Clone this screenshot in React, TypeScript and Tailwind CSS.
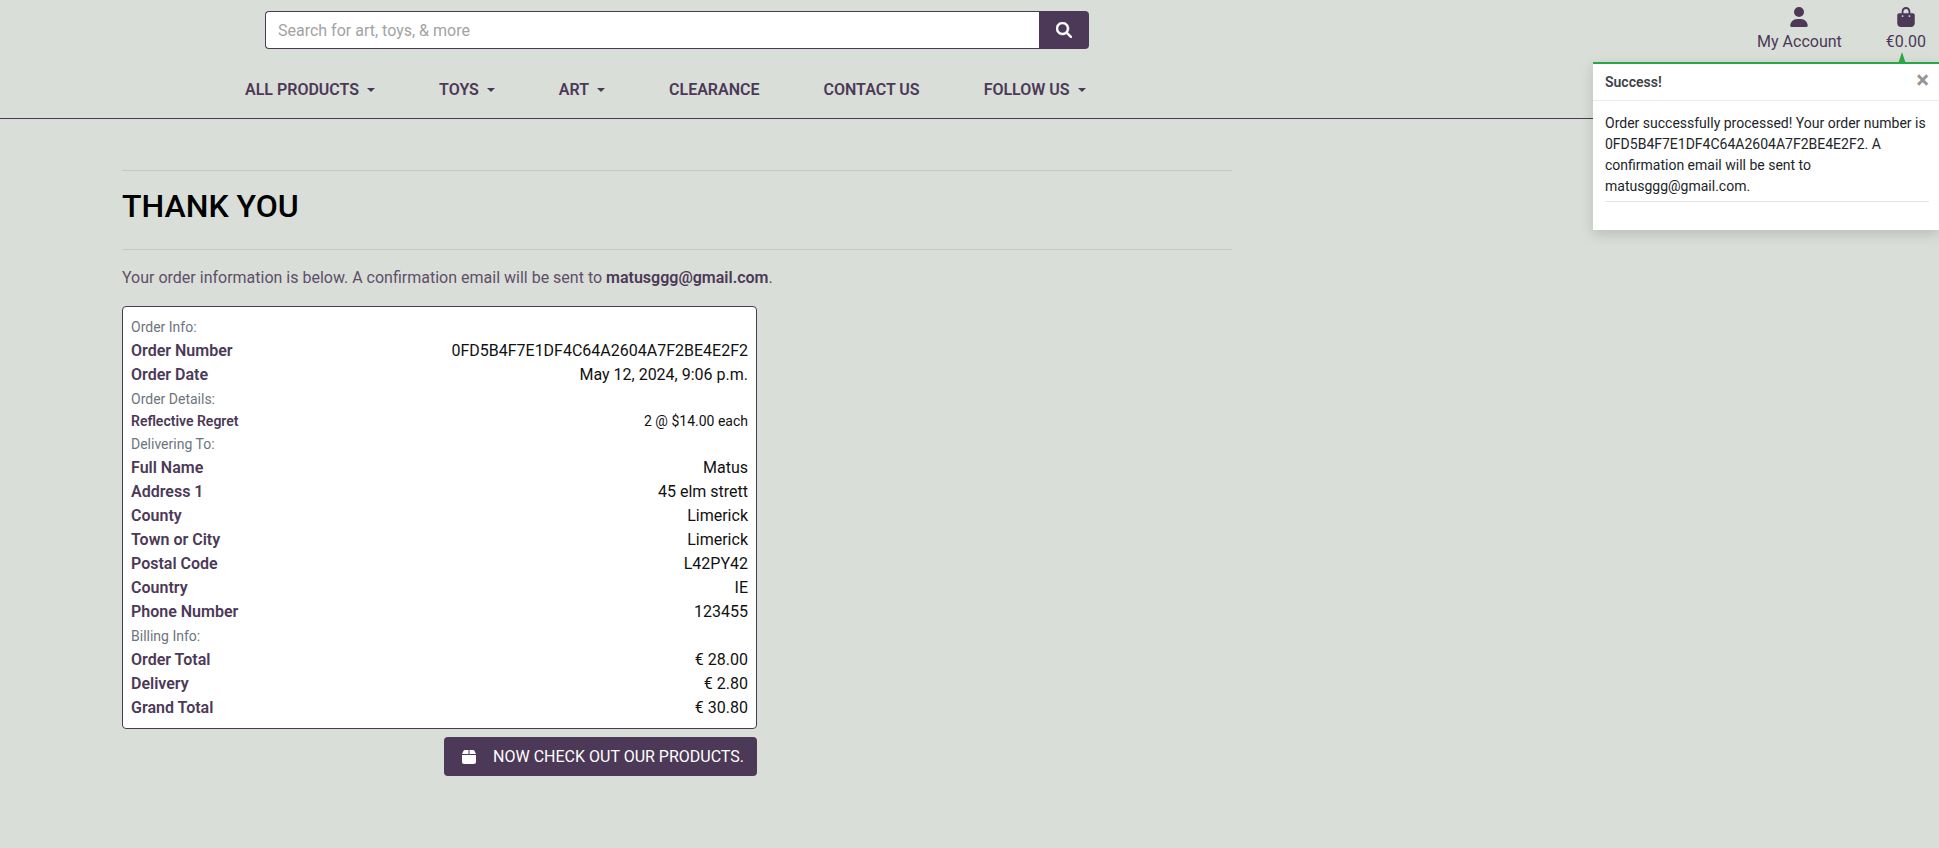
import React from "react";
import { FaBagShopping, FaBox, FaMagnifyingGlass, FaUser } from "react-icons/fa6";

const navItems = [
  { label: "ALL PRODUCTS", menu: true },
  { label: "TOYS", menu: true },
  { label: "ART", menu: true },
  { label: "CLEARANCE", menu: false },
  { label: "CONTACT US", menu: false },
  { label: "FOLLOW US", menu: true },
];

type Row = { label: string; value: string; small?: boolean };

const sections: { title: string; rows: Row[] }[] = [
  {
    title: "Order Info:",
    rows: [
      { label: "Order Number", value: "0FD5B4F7E1DF4C64A2604A7F2BE4E2F2" },
      { label: "Order Date", value: "May 12, 2024, 9:06 p.m." },
    ],
  },
  {
    title: "Order Details:",
    rows: [{ label: "Reflective Regret", value: "2 @ $14.00 each", small: true }],
  },
  {
    title: "Delivering To:",
    rows: [
      { label: "Full Name", value: "Matus" },
      { label: "Address 1", value: "45 elm strett" },
      { label: "County", value: "Limerick" },
      { label: "Town or City", value: "Limerick" },
      { label: "Postal Code", value: "L42PY42" },
      { label: "Country", value: "IE" },
      { label: "Phone Number", value: "123455" },
    ],
  },
  {
    title: "Billing Info:",
    rows: [
      { label: "Order Total", value: "€ 28.00" },
      { label: "Delivery", value: "€ 2.80" },
      { label: "Grand Total", value: "€ 30.80" },
    ],
  },
];

function Caret() {
  return (
    <svg className="h-1 w-2 fill-current" viewBox="0 0 8 4" aria-hidden="true">
      <path d="M0 0h8L4 4z" />
    </svg>
  );
}

function SearchForm() {
  return (
    <form className="flex h-[38px] w-full max-w-[824px]" onSubmit={(e) => e.preventDefault()}>
      <input
        type="text"
        aria-label="Search"
        placeholder="Search for art, toys, & more"
        className="min-w-0 flex-1 rounded-l border border-r-0 border-[#4c3957] bg-white px-3 pt-0.5 text-base text-[#4c3957] placeholder:text-[#a3a3a3]"
      />
      <button
        type="submit"
        aria-label="Search"
        className="flex w-[50px] items-center justify-center rounded-r bg-[#4c3957] text-white"
      >
        <FaMagnifyingGlass className="size-4 stroke-current" strokeWidth={16} />
      </button>
    </form>
  );
}

function Header() {
  return (
    <header className="relative border-b border-[#4c3957] pt-[11px] pb-4">
      <div className="flex items-start justify-between pr-[13px] pl-[265px]">
        <SearchForm />
        <div className="-mt-1 flex shrink-0 gap-11">
          <a href="#account" className="flex flex-col items-center">
            <FaUser className="h-5 w-[18px]" />
            <span className="mt-[3px] leading-6">My Account</span>
          </a>
          <a href="#bag" className="flex flex-col items-center">
            <FaBagShopping className="h-5 w-[18px]" />
            <span className="mt-[3px] leading-6">€0.00</span>
          </a>
        </div>
      </div>
      <nav className="flex gap-16 pt-6 pl-[245px] font-semibold">
        {navItems.map((item) => (
          <a key={item.label} href="#nav" className="flex items-center gap-2 leading-6 whitespace-nowrap">
            {item.label}
            {item.menu && <Caret />}
          </a>
        ))}
      </nav>
      <Toast />
    </header>
  );
}

function Toast() {
  return (
    <div
      role="status"
      className="absolute top-[62px] right-0 w-[346px] border-t-2 border-[#28a745] bg-white text-sm leading-[21px] text-[#212529] shadow-[0_4px_12px_rgba(0,0,0,0.15)]"
    >
      <svg className="absolute right-[33px] bottom-full h-3 w-2 fill-[#28a745]" viewBox="0 0 8 12" aria-hidden="true">
        <path d="M4 0l4 12H0z" />
      </svg>
      <div className="flex h-[37px] items-center justify-between border-b border-[#ececec] pr-2.5 pl-3">
        <strong className="font-semibold text-[#3d4247]">Success!</strong>
        <button type="button" aria-label="Close" className="pb-1 text-2xl leading-6 font-bold text-[#969696]">
          ×
        </button>
      </div>
      <div className="pt-3 pr-2.5 pb-7 pl-3">
        <p className="pb-1">
          Order successfully processed! Your order number is 0FD5B4F7E1DF4C64A2604A7F2BE4E2F2. A confirmation email
          will be sent to matusggg@gmail.com.
        </p>
        <hr className="border-[#e5e5e5]" />
      </div>
    </div>
  );
}

function OrderSummary() {
  return (
    <div className="rounded border border-[#4c3957] bg-white p-2">
      {sections.map((section) => (
        <section key={section.title}>
          <h2 className="text-sm leading-6 text-[#6c757d]">{section.title}</h2>
          <dl>
            {section.rows.map((row) => (
              <div
                key={row.label}
                className={
                  row.small
                    ? "flex justify-between text-sm leading-[21px]"
                    : "flex justify-between text-base leading-6"
                }
              >
                <dt className="font-semibold">{row.label}</dt>
                <dd className="text-[#111111]">{row.value}</dd>
              </div>
            ))}
          </dl>
        </section>
      ))}
    </div>
  );
}

export default function App() {
  return (
    <div className="min-h-screen bg-[#d9ded8] font-[Roboto,sans-serif] text-base text-[#4c3957]">
      <Header />
      <main className="ml-[122px] max-w-[1110px] pt-[51px] pb-10">
        <hr className="border-[#c2c8c2]" />
        <h1 className="pt-4 pb-6 text-[32px] leading-[38px] font-medium text-black">THANK YOU</h1>
        <hr className="border-[#c2c8c2]" />
        <p className="py-4 leading-6 text-[#5f4e69]">
          Your order information is below. A confirmation email will be sent to{" "}
          <strong className="font-semibold text-[#4c3957]">matusggg@gmail.com</strong>.
        </p>
        <div className="max-w-[635px]">
          <OrderSummary />
          <div className="mt-2 flex justify-end">
            <a
              href="#products"
              className="flex h-[39px] items-center gap-4 rounded bg-[#4c3957] pr-[13px] pl-[17px] text-white"
            >
              <FaBox className="size-4" />
              NOW CHECK OUT OUR PRODUCTS.
            </a>
          </div>
        </div>
      </main>
    </div>
  );
}
